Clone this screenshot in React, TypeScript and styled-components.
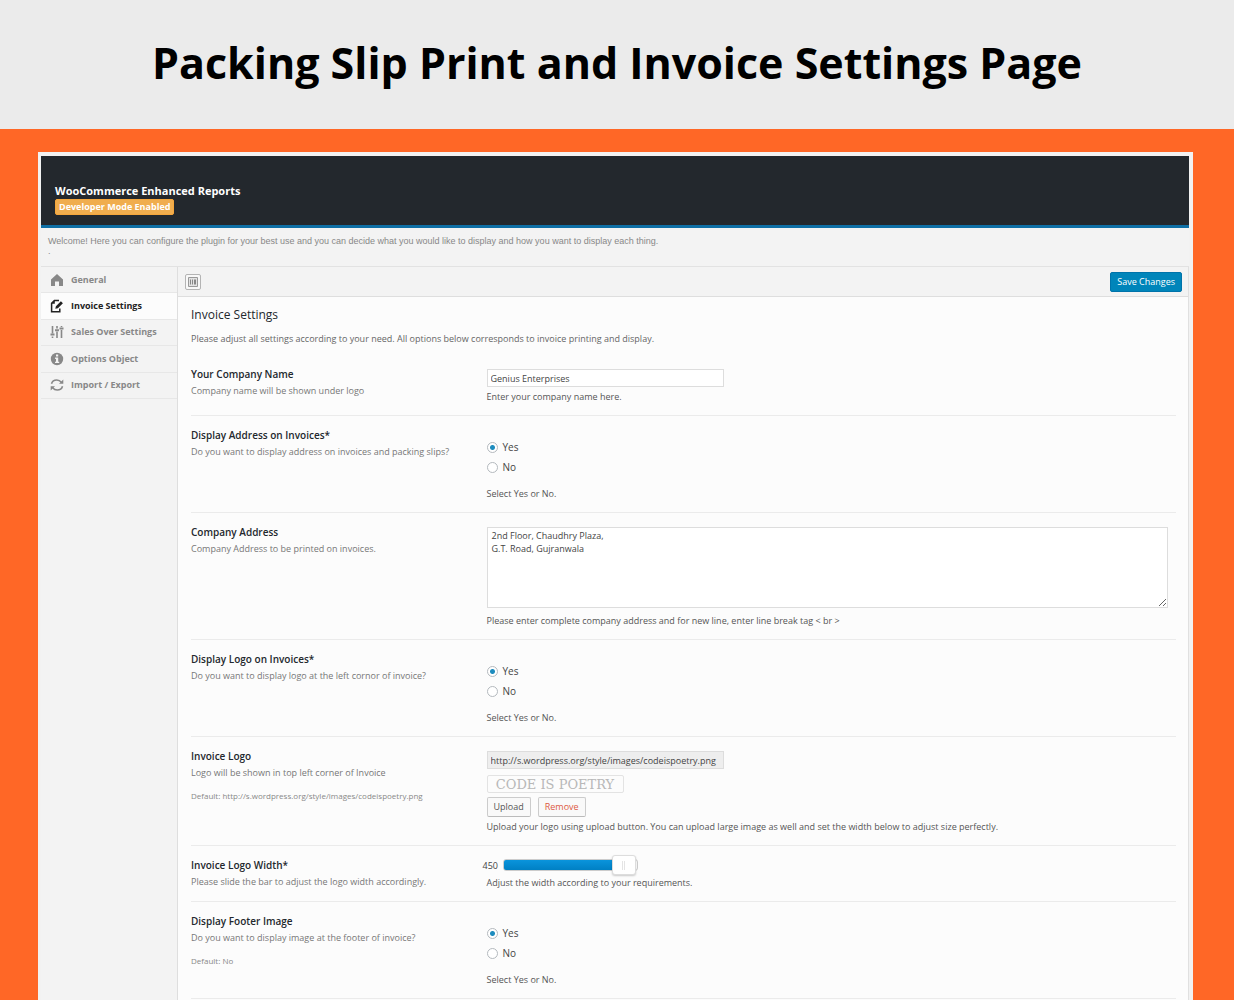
import React, { useState } from "react";
import styled, { createGlobalStyle, css } from "styled-components";

const sans = `"Open Sans", "Noto Sans", sans-serif`;

const GlobalStyle = createGlobalStyle`
  *, *::before, *::after { box-sizing: border-box; }
  body { margin: 0; background: #ff6726; font-family: ${sans}; }
  h1, h2, h3, p { margin: 0; }
  button, input, textarea { font-family: inherit; margin: 0; }
`;

const Page = styled.div`
  display: flex;
  flex-direction: column;
  min-height: 100vh;
`;

const Banner = styled.header`
  display: flex;
  justify-content: center;
  padding: 31px 16px 34px;
  background: #ebebeb;
`;

const BannerTitle = styled.h1`
  font: 700 43px/64px ${sans};
  color: #000;
  text-align: center;
`;

const Stage = styled.main`
  flex: 1;
  display: flex;
  padding: 23px 41px 0 38px;
`;

const Panel = styled.div`
  flex: 1;
  display: flex;
  flex-direction: column;
  min-width: 0;
  padding: 4px 4px 0 3px;
  background: #f2f2f2;
`;

const PanelHeader = styled.div`
  display: flex;
  flex-direction: column;
  align-items: flex-start;
  padding: 27px 14px 10px;
  background: #23282d;
  border-bottom: 3px solid #0e6fa5;
`;

const PluginName = styled.h2`
  font-size: 11px;
  line-height: 16px;
  font-weight: 700;
  color: #fff;
`;

const Badge = styled.span`
  padding: 0 3px;
  border: 1px solid #f5a63b;
  border-radius: 2px;
  background: #f0ad4e;
  color: #fff;
  font-size: 9px;
  line-height: 14px;
  font-weight: 700;
`;

const Intro = styled.div`
  padding: 8px 7px 10px;
  border-bottom: 1px solid #e2e2e2;
  background: #f3f3f3;
  color: #888;
  font: 9px/10px "Liberation Sans", Arial, sans-serif;
`;

const Body = styled.div`
  flex: 1;
  display: grid;
  grid-template-columns: 137px minmax(0, 1fr);
  border-right: 1px solid #e0e0e0;
`;

const Sidebar = styled.nav`
  border-right: 1px solid #dedede;
  background: #f3f3f3;
`;

const NavList = styled.ul`
  display: grid;
  grid-template-rows: repeat(5, 1fr);
  height: 132px;
  margin: 0;
  padding: 0;
  list-style: none;
`;

const NavLink = styled.a<{ $active: boolean }>`
  display: flex;
  align-items: center;
  gap: 7px;
  height: 100%;
  padding: 0 9px;
  border-bottom: 1px solid #e7e7e7;
  background: ${(p) => (p.$active ? "#fcfcfc" : "transparent")};
  color: ${(p) => (p.$active ? "#222" : "#888")};
  font-size: 9px;
  line-height: 14px;
  font-weight: 700;
  text-decoration: none;

  svg {
    flex: none;
    width: 14px;
    height: 14px;
  }
`;

const Content = styled.form`
  background: #fcfcfc;
`;

const Toolbar = styled.div`
  display: flex;
  align-items: center;
  justify-content: space-between;
  height: 30px;
  padding: 0 6px 0 7px;
  border-bottom: 1px solid #dedede;
  background: #f3f3f3;
`;

const ExpandButton = styled.button`
  display: grid;
  place-items: center;
  width: 16px;
  height: 16px;
  padding: 0;
  border: 1px solid #b4b4b4;
  border-radius: 2px;
  background: #f8f8f8;
`;

const SaveButton = styled.button`
  height: 20px;
  padding: 0 6px;
  border: 1px solid #0073aa;
  border-radius: 2px;
  background: #0085ba;
  color: #fff;
  font-size: 9px;
  line-height: 14px;
`;

const Section = styled.div`
  padding: 11px 12px 0 13px;
`;

const SectionTitle = styled.h2`
  color: #23282d;
  font-size: 12px;
  line-height: 14px;
  font-weight: 500;
`;

const small = css`
  font-size: 9px;
  line-height: 14px;
`;

const SectionText = styled.p`
  ${small}
  margin: 10px 0 9px;
  color: #666;
`;

const Row = styled.div`
  display: grid;
  grid-template-columns: 30% minmax(0, 1fr);
  padding: 12px 0 11px;
  border-bottom: 1px solid #ebebeb;
`;

const RowTitle = styled.h3`
  color: #23282d;
  font-size: 10px;
  line-height: 14px;
  font-weight: 600;
`;

const RowText = styled.p`
  ${small}
  margin-top: 3px;
  color: #777;
`;

const RowDefault = styled.p`
  margin-top: 9px;
  color: #888;
  font-size: 8px;
  line-height: 14px;
`;

const Field = styled.div`
  display: flex;
  flex-direction: column;
  align-items: flex-start;
  padding: 2px 8px 0 0;
`;

const TextInput = styled.input`
  width: 237px;
  height: 18px;
  padding: 0 3px;
  border: 1px solid #ddd;
  border-radius: 0;
  background: ${(p) => (p.readOnly ? "#eee" : "#fff")};
  color: #444;
  font-size: 9px;
`;

const TextArea = styled.textarea`
  width: 100%;
  height: 81px;
  padding: 1px 4px;
  border: 1px solid #ddd;
  background: #fff;
  color: #444;
  font-size: 9px;
  line-height: 13px;
  resize: vertical;
`;

const Help = styled.p<{ $gap: number }>`
  ${small}
  margin-top: ${(p) => p.$gap}px;
  color: #555;
`;

const Choices = styled.div`
  display: flex;
  flex-direction: column;
  gap: 6px;
  padding-top: 10px;
`;

const Choice = styled.label`
  display: flex;
  align-items: center;
  gap: 5px;
  font-size: 10px;
  line-height: 14px;
  color: #444;
`;

const Radio = styled.input`
  appearance: none;
  width: 11px;
  height: 11px;
  border: 1px solid #b4b9be;
  border-radius: 50%;
  background: #fff;

  &:checked {
    background: radial-gradient(circle, #1e8cbe 0 2px, #fff 3px);
  }
`;

const LogoPreview = styled.div`
  min-width: 137px;
  height: 18px;
  margin: 6px 0 4px;
  padding: 0 4px;
  border: 1px solid #e3e3e3;
  border-radius: 2px;
  color: #b8b8b8;
  font: 13px/17px "DejaVu Serif", serif;
  text-align: center;
`;

const ButtonRow = styled.div`
  display: flex;
  gap: 7px;
`;

const SmallButton = styled.button<{ $danger?: boolean }>`
  height: 20px;
  padding: 0 6px;
  border: 1px solid #ccc;
  border-bottom-color: #bbb;
  border-radius: 2px;
  background: #f9f9f9;
  color: ${(p) => (p.$danger ? "#dd5a43" : "#555")};
  font-size: 9px;
  line-height: 14px;
`;

const SliderRow = styled.label`
  display: flex;
  align-items: center;
  gap: 5px;
  height: 20px;
  margin: -5px 0 0 -4px;
  color: #444;
  font-size: 9px;
`;

const Slider = styled.input`
  appearance: none;
  width: 135px;
  height: 20px;
  background: transparent;

  &::-webkit-slider-runnable-track {
    height: 12px;
    border: 1px solid #ccc;
    border-radius: 3px;
    background: linear-gradient(#0a94dc, #0080c4) 0 0 / var(--fill) 100% no-repeat, #fff;
  }

  &::-webkit-slider-thumb {
    appearance: none;
    width: 24px;
    height: 20px;
    margin-top: -5px;
    border: 1px solid #ddd;
    border-radius: 3px;
    background: linear-gradient(90deg, #e4e4e4 0 1px, transparent 1px 2px, #e4e4e4 2px 3px) center / 3px 9px no-repeat, #fff;
    box-shadow: 0 1px 2px rgba(0, 0, 0, 0.2);
  }
`;

const HomeIcon = () => (
  <svg viewBox="0 0 14 14" fill="currentColor" aria-hidden="true">
    <path d="M7 1 1 6.5V13h4V8.6h4V13h4V6.5z" />
  </svg>
);

const EditIcon = () => (
  <svg viewBox="0 0 14 14" fill="none" stroke="currentColor" aria-hidden="true">
    <path strokeWidth="1.5" d="M9 1.4H4.4L1.6 4.2v8.5h8.2V9.5" />
    <path fill="currentColor" stroke="none" d="M1.2 4.8h3.6V1.2zM10.9 2.3l2 1.9-5 5-2.6.6.6-2.5z" />
  </svg>
);

const SlidersIcon = () => (
  <svg viewBox="0 0 14 14" fill="none" stroke="currentColor" aria-hidden="true">
    <path strokeWidth="1.6" d="M2.5 1v7.5M2.5 11.5V13M7 1v2.5M7 6.5V13M11.5 1v1M11.5 5v8" />
    <path strokeWidth="2" d="M.5 9.5h4M5 5.2h4M9.5 3.5h4" />
  </svg>
);

const InfoIcon = () => (
  <svg viewBox="0 0 14 14" fill="currentColor" aria-hidden="true">
    <circle cx="7" cy="7" r="6.2" />
    <path fill="#f3f3f3" d="M6 2.6h2.2v1.9H6zM5.1 5.6h3.1v4.2h1v1.3H5V9.8h1V6.9h-.9z" />
  </svg>
);

const RefreshIcon = () => (
  <svg viewBox="0 0 14 14" fill="none" stroke="currentColor" aria-hidden="true">
    <path strokeWidth="1.6" d="M1.5 5.8C2.2 3.2 4.4 2 6.8 2c2 0 3.4.8 4.5 2.2M12.5 8.2c-.7 2.6-2.9 3.8-5.3 3.8-2 0-3.4-.8-4.5-2.2" />
    <path fill="currentColor" stroke="none" d="M13.3 1.5v4.3H9zM.7 12.5V8.2H5z" />
  </svg>
);

const ExpandIcon = () => (
  <svg width="10" height="10" viewBox="0 0 10 10" aria-hidden="true">
    <path fill="#e2e2e2" stroke="#999" d="M.5.5h9v9h-9z" />
    <path fill="#888" d="M2 2.5h1v5H2zM4 2.5h1v5H4zM6 2.5h2v5H6z" />
  </svg>
);

const navItems = [
  { label: "General", Icon: HomeIcon },
  { label: "Invoice Settings", Icon: EditIcon },
  { label: "Sales Over Settings", Icon: SlidersIcon },
  { label: "Options Object", Icon: InfoIcon },
  { label: "Import / Export", Icon: RefreshIcon },
];

type SettingProps = {
  id: string;
  title: string;
  text: string;
  note?: string;
  children: React.ReactNode;
};

function Setting({ id, title, text, note, children }: SettingProps) {
  return (
    <Row>
      <div>
        <RowTitle id={`${id}-title`}>{title}</RowTitle>
        <RowText>{text}</RowText>
        {note && <RowDefault>{note}</RowDefault>}
      </div>
      <Field>{children}</Field>
    </Row>
  );
}

function YesNo({ id }: { id: string }) {
  return (
    <>
      <Choices role="radiogroup" aria-labelledby={`${id}-title`}>
        <Choice>
          <Radio type="radio" name={id} value="yes" defaultChecked />
          Yes
        </Choice>
        <Choice>
          <Radio type="radio" name={id} value="no" />
          No
        </Choice>
      </Choices>
      <Help $gap={13}>Select Yes or No.</Help>
    </>
  );
}

const MAX_LOGO_WIDTH = 455;

export default function App() {
  const [active, setActive] = useState("Invoice Settings");
  const [width, setWidth] = useState(450);

  return (
    <Page>
      <GlobalStyle />
      <Banner>
        <BannerTitle>Packing Slip Print and Invoice Settings Page</BannerTitle>
      </Banner>
      <Stage>
        <Panel>
          <PanelHeader>
            <PluginName>WooCommerce Enhanced Reports</PluginName>
            <Badge>Developer Mode Enabled</Badge>
          </PanelHeader>
          <Intro>
            <p>
              Welcome! Here you can configure the plugin for your best use and you can decide what you would like to
              display and how you want to display each thing.
            </p>
            <p>.</p>
          </Intro>
          <Body>
            <Sidebar>
              <NavList>
                {navItems.map(({ label, Icon }) => (
                  <li key={label}>
                    <NavLink href="#" $active={label === active} onClick={() => setActive(label)}>
                      <Icon />
                      {label}
                    </NavLink>
                  </li>
                ))}
              </NavList>
            </Sidebar>
            <Content onSubmit={(e) => e.preventDefault()}>
              <Toolbar>
                <ExpandButton type="button" aria-label="Expand">
                  <ExpandIcon />
                </ExpandButton>
                <SaveButton type="submit">Save Changes</SaveButton>
              </Toolbar>
              <Section>
                <SectionTitle>Invoice Settings</SectionTitle>
                <SectionText>
                  Please adjust all settings according to your need. All options below corresponds to invoice printing
                  and display.
                </SectionText>
                <Setting id="company" title="Your Company Name" text="Company name will be shown under logo">
                  <TextInput aria-labelledby="company-title" defaultValue="Genius Enterprises" />
                  <Help $gap={3}>Enter your company name here.</Help>
                </Setting>
                <Setting
                  id="show-address"
                  title="Display Address on Invoices*"
                  text="Do you want to display address on invoices and packing slips?"
                >
                  <YesNo id="show-address" />
                </Setting>
                <Setting id="address" title="Company Address" text="Company Address to be printed on invoices.">
                  <TextArea
                    aria-labelledby="address-title"
                    defaultValue={"2nd Floor, Chaudhry Plaza,\nG.T. Road, Gujranwala"}
                  />
                  <Help $gap={6}>
                    Please enter complete company address and for new line, enter line break tag &lt; br &gt;
                  </Help>
                </Setting>
                <Setting
                  id="show-logo"
                  title="Display Logo on Invoices*"
                  text="Do you want to display logo at the left cornor of invoice?"
                >
                  <YesNo id="show-logo" />
                </Setting>
                <Setting
                  id="logo"
                  title="Invoice Logo"
                  text="Logo will be shown in top left corner of Invoice"
                  note="Default: http://s.wordpress.org/style/images/codeispoetry.png"
                >
                  <TextInput
                    aria-labelledby="logo-title"
                    readOnly
                    defaultValue="http://s.wordpress.org/style/images/codeispoetry.png"
                  />
                  <LogoPreview>CODE IS POETRY</LogoPreview>
                  <ButtonRow>
                    <SmallButton type="button">Upload</SmallButton>
                    <SmallButton type="button" $danger>
                      Remove
                    </SmallButton>
                  </ButtonRow>
                  <Help $gap={3}>
                    Upload your logo using upload button. You can upload large image as well and set the width below to
                    adjust size perfectly.
                  </Help>
                </Setting>
                <Setting
                  id="logo-width"
                  title="Invoice Logo Width*"
                  text="Please slide the bar to adjust the logo width accordingly."
                >
                  <SliderRow>
                    {width}
                    <Slider
                      type="range"
                      min={0}
                      max={MAX_LOGO_WIDTH}
                      value={width}
                      style={{ "--fill": `${(width / MAX_LOGO_WIDTH) * 90}%` } as React.CSSProperties}
                      aria-labelledby="logo-width-title"
                      onChange={(e) => setWidth(Number(e.target.value))}
                    />
                  </SliderRow>
                  <Help $gap={1}>Adjust the width according to your requirements.</Help>
                </Setting>
                <Setting
                  id="footer"
                  title="Display Footer Image"
                  text="Do you want to display image at the footer of invoice?"
                  note="Default: No"
                >
                  <YesNo id="footer" />
                </Setting>
              </Section>
            </Content>
          </Body>
        </Panel>
      </Stage>
    </Page>
  );
}
